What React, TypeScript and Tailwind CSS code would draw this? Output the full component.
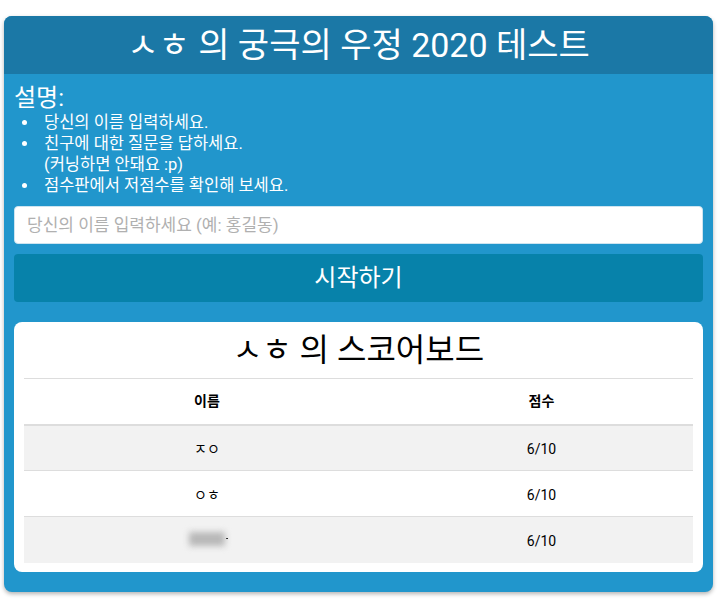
import React from "react";

const rows = [
  { name: "ㅈㅇ", score: "6/10" },
  { name: "ㅇㅎ", score: "6/10" },
  { name: "", score: "6/10" },
];

function Item({ children }: { children: React.ReactNode }) {
  return (
    <li className="flex">
      <span className="w-[30px] shrink-0 pl-[8px] pt-[8px]">
        <span className="block w-[5px] h-[5px] rounded-full bg-white" />
      </span>
      <span>{children}</span>
    </li>
  );
}

export default function App() {
  return (
    <div
      className="w-[722px] h-[600px] bg-white pt-[16px] px-[4px]"
      style={{ fontFamily: "Roboto, 'Noto Sans CJK KR', sans-serif" }}
    >
      <div className="w-[709px] rounded-[8px] bg-[#2196cc] shadow-[0_2px_4px_rgba(0,0,0,0.3)] overflow-hidden">
        <div className="h-[58px] bg-[#1b78a6] flex items-center justify-center">
          <h1 className="text-white text-[34px] leading-none">ㅅㅎ 의 궁극의 우정 2020 테스트</h1>
        </div>
        <div className="px-[10px] pt-[10px] pb-[20px]">
          <h2 className="text-white text-[24px] leading-[28px]">설명:</h2>
          <ul className="text-white text-[16.5px] leading-[21px]">
            <Item>당신의 이름 입력하세요.</Item>
            <Item>
              친구에 대한 질문을 답하세요.
              <br />
              (커닝하면 안돼요 :p)
            </Item>
            <Item>점수판에서 저점수를 확인해 보세요.</Item>
          </ul>
          <input
            className="mt-[10px] w-full h-[38px] rounded-[4px] bg-white px-[12px] text-[17px] placeholder:text-[#b0b0b0] border border-[#cde4f0] outline-none"
            placeholder="당신의 이름 입력하세요 (예: 홍길동)"
          />
          <button className="mt-[10px] w-full h-[48px] rounded-[4px] bg-[#0782aa] text-white text-[24px]">
            시작하기
          </button>
          <div className="mt-[20px] bg-white rounded-[8px] px-[10px] pb-[9px]">
            <div className="h-[56px] flex items-center justify-center text-[32px] text-black">
              ㅅㅎ 의 스코어보드
            </div>
            <table className="w-full border-collapse text-[14px] text-black">
              <thead>
                <tr className="border-t border-[#dddddd] border-b-2">
                  <th className="w-[366px] h-[46px] font-bold text-center">이름</th>
                  <th className="h-[46px] font-bold text-center">점수</th>
                </tr>
              </thead>
              <tbody>
                {rows.map((r, i) => (
                  <tr
                    key={i}
                    className={
                      (i % 2 === 0 ? "bg-[#f2f2f2]" : "bg-white") +
                      (i < rows.length - 1 ? " border-b border-[#dddddd]" : "")
                    }
                  >
                    <td className="h-[46px] pt-[3px] text-center">
                      {r.name ? (
                        r.name
                      ) : (
                        <span className="inline-flex items-center">
                          <span className="inline-block w-[36px] h-[14px] bg-[#b8b8b8] blur-[3px] ml-[3px]" />
                          <span className="inline-block w-[2px] h-[1px] bg-black ml-[1px]" />
                        </span>
                      )}
                    </td>
                    <td className="h-[46px] pt-[3px] text-center">{r.score}</td>
                  </tr>
                ))}
              </tbody>
            </table>
          </div>
        </div>
      </div>
    </div>
  );
}
